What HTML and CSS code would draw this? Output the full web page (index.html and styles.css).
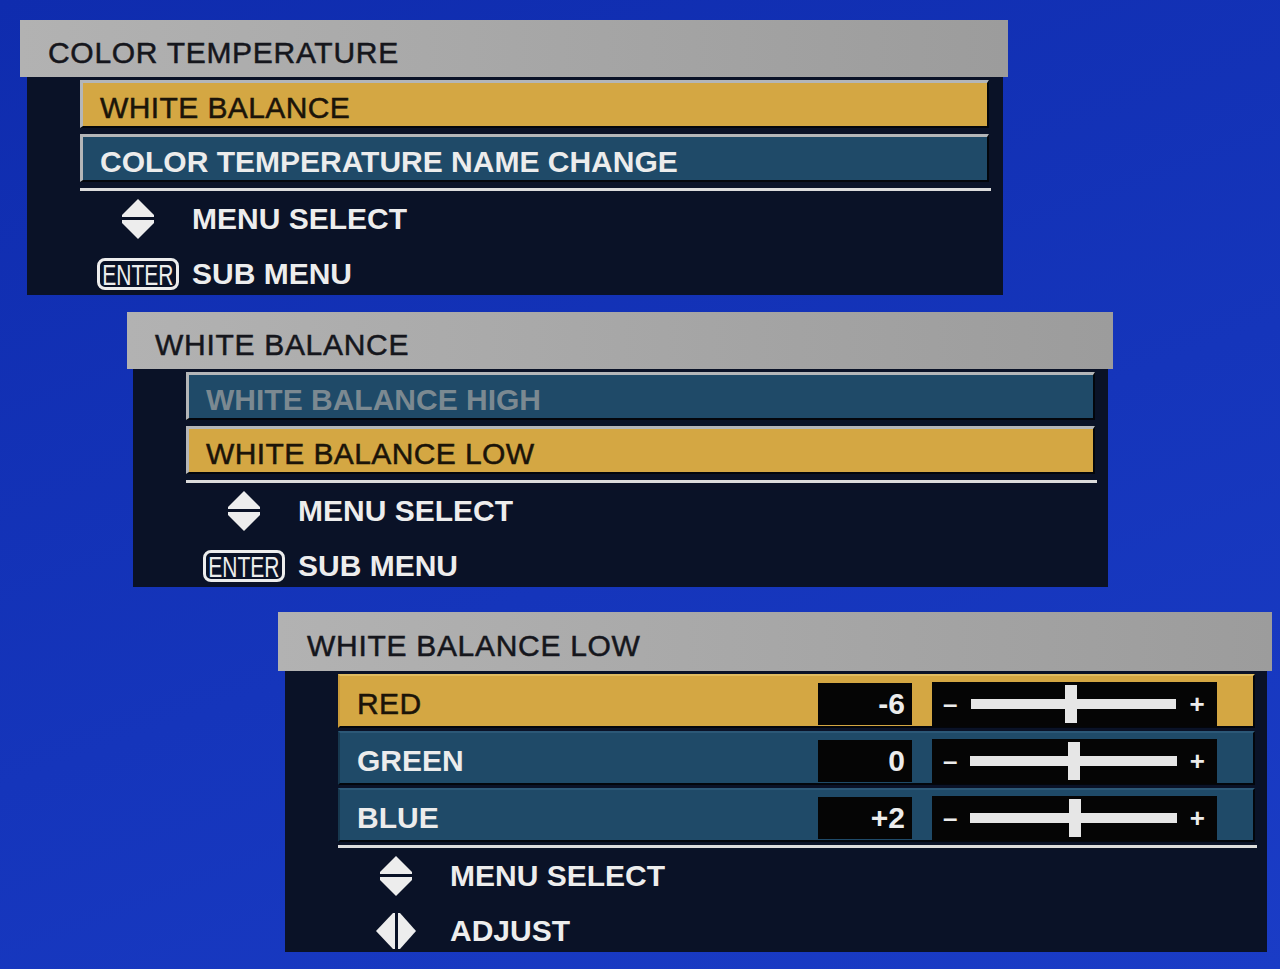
FILE: index.html
```html
<!DOCTYPE html>
<html lang="en">
<head>
  <meta charset="UTF-8">
  <meta name="viewport" content="width=device-width, initial-scale=1.0">
  <link rel="stylesheet" href="styles.css">
  <title>Projector Menu - White Balance</title>
</head>
<body>
  <!-- color temperature menu -->
  <section class="panel panel-temp">
    <div class="panel-head">COLOR TEMPERATURE</div>
    <div class="panel-body">
      <div class="item is-active">WHITE BALANCE</div>
      <div class="item">COLOR TEMPERATURE NAME CHANGE</div>
      <div class="rule"></div>
      <ul class="hints">
        <li>
          <span class="key">
            <svg width="32" height="40" viewBox="0 0 32 40"><polygon points="16,0 32,16 32,18 0,18 0,16" fill="#ededed"/><polygon points="0,21 32,21 32,24 16,40 0,24" fill="#ededed"/></svg>
          </span>
          MENU SELECT
        </li>
        <li>
          <span class="key"><span class="enter"><span>ENTER</span></span></span>
          SUB MENU
        </li>
      </ul>
    </div>
  </section>

  <!-- white balance menu -->
  <section class="panel panel-wb">
    <div class="panel-head">WHITE BALANCE</div>
    <div class="panel-body">
      <div class="item is-off">WHITE BALANCE HIGH</div>
      <div class="item is-active">WHITE BALANCE LOW</div>
      <div class="rule"></div>
      <ul class="hints">
        <li>
          <span class="key">
            <svg width="32" height="40" viewBox="0 0 32 40"><polygon points="16,0 32,16 32,18 0,18 0,16" fill="#ededed"/><polygon points="0,21 32,21 32,24 16,40 0,24" fill="#ededed"/></svg>
          </span>
          MENU SELECT
        </li>
        <li>
          <span class="key"><span class="enter"><span>ENTER</span></span></span>
          SUB MENU
        </li>
      </ul>
    </div>
  </section>

  <!-- white balance low: per channel adjust -->
  <section class="panel panel-low">
    <div class="panel-head">WHITE BALANCE LOW</div>
    <div class="panel-body">
      <div class="item channel is-active">
        <span class="label">RED</span>
        <span class="value">-6</span>
        <span class="slider"><span class="end">–</span><span class="track"><span class="tick" style="left: 48.5%"></span></span><span class="end">+</span></span>
      </div>
      <div class="item channel">
        <span class="label">GREEN</span>
        <span class="value">0</span>
        <span class="slider"><span class="end">–</span><span class="track"><span class="tick" style="left: 50%"></span></span><span class="end">+</span></span>
      </div>
      <div class="item channel">
        <span class="label">BLUE</span>
        <span class="value">+2</span>
        <span class="slider"><span class="end">–</span><span class="track"><span class="tick" style="left: 50.5%"></span></span><span class="end">+</span></span>
      </div>
      <div class="rule"></div>
      <ul class="hints">
        <li>
          <span class="key">
            <svg width="32" height="40" viewBox="0 0 32 40"><polygon points="16,0 32,16 32,18 0,18 0,16" fill="#ededed"/><polygon points="0,21 32,21 32,24 16,40 0,24" fill="#ededed"/></svg>
          </span>
          MENU SELECT
        </li>
        <li>
          <span class="key">
            <svg width="40" height="36" viewBox="0 0 40 36"><polygon points="0,18 17,0 19,0 19,36 17,36" fill="#ededed"/><polygon points="22,0 24,0 40,18 24,36 22,36" fill="#ededed"/></svg>
          </span>
          ADJUST
        </li>
      </ul>
    </div>
  </section>
</body>
</html>
```

FILE: styles.css
```css
* {
  box-sizing: border-box;
}

html, body {
  height: 100%;
}

body {
  margin: 0;
  padding-top: 20px;
  overflow: hidden;
  font-family: "Liberation Sans", Arial, sans-serif;
  background: linear-gradient(160deg, #0f2cae 0%, #1535bb 55%, #1a3cc6 100%);
}

/* panels */
.panel {
  width: 988px;
  margin-left: 20px;
}

.panel-wb {
  width: 986px;
  margin-top: 17px;
  margin-left: 127px;
}

.panel-low {
  width: 994px;
  margin-top: 25px;
  margin-left: 278px;
}

.panel-head {
  height: 57px;
  padding: 8px 0 0 28px;
  display: flex;
  align-items: center;
  background: linear-gradient(to right, #b2b2b2, #9c9c9c);
  color: #15161c;
  font-size: 30px;
  letter-spacing: 0.7px;
  -webkit-text-stroke: 0.5px #15161c;
}

.panel-low .panel-head {
  height: 59px;
  padding-left: 29px;
}

.panel-body {
  margin: 0 5px 0 7px;
  padding: 3px 14px 0 53px;
  background: #0a1227;
}

.panel-wb .panel-body {
  margin-left: 6px;
  padding-right: 13px;
}

.panel-low .panel-body {
  padding-right: 12px;
}

/* menu rows */
.item {
  height: 48px;
  margin-bottom: 6px;
  padding: 6px 0 0 17px;
  display: flex;
  align-items: center;
  border-top: 3px solid #b4b6b8;
  border-left: 3px solid #b4b6b8;
  border-right: 2px solid #03060c;
  border-bottom: 2px solid #03060c;
  background: #1f4a68;
  color: #ececec;
  font-size: 30px;
  font-weight: bold;
}

.item.is-active {
  background: #d4a743;
  color: #1b1409;
  font-weight: normal;
  letter-spacing: 0.4px;
  -webkit-text-stroke: 0.5px #1b1409;
}

.item.is-off {
  color: #7b8991;
}

.rule {
  height: 3px;
  margin: 1px -2px 0 0;
  background: #dcdcdc;
}

.panel-low .item {
  height: 54px;
  margin-bottom: 3px;
  border-top-width: 2px;
  border-left-width: 2px;
  border-top-color: #2c5877;
  border-left-color: #17384f;
}

.panel-low .item.is-active {
  border-top-color: #e0bc60;
  border-left-color: #c99b3a;
}

.panel-low .rule {
  margin-top: 3px;
}

/* channel rows with value and slider */
.channel .label {
  flex: 1;
}

.value {
  width: 94px;
  height: 42px;
  margin-right: 20px;
  padding-right: 7px;
  display: flex;
  align-items: center;
  justify-content: flex-end;
  background: #050505;
  color: #ececec;
  font-weight: bold;
  letter-spacing: 0;
  -webkit-text-stroke: 0;
}

.slider {
  width: 285px;
  height: 45px;
  margin-right: 36px;
  padding: 0 12px 0 11px;
  display: flex;
  align-items: center;
  background: #050505;
  color: #ececec;
  font-size: 26px;
  font-weight: bold;
  -webkit-text-stroke: 0;
}

.track {
  flex: 1;
  height: 10px;
  margin: 0 13px;
  position: relative;
  background: #e6e6e6;
}

.tick {
  position: absolute;
  top: -14px;
  width: 12px;
  height: 38px;
  margin-left: -6px;
  background: #e6e6e6;
}

/* key hints */
.hints {
  list-style: none;
  margin: 0;
  padding: 0 0 0 17px;
}

.hints li {
  height: 52px;
  padding-top: 3px;
  display: flex;
  align-items: center;
  gap: 13px;
  color: #ededed;
  font-size: 30px;
  font-weight: bold;
}

.hints li + li {
  padding-top: 9px;
}

.hints .key {
  width: 82px;
  display: flex;
  justify-content: center;
}

/* boxed ENTER key */
.enter {
  width: 82px;
  height: 32px;
  border: 3px solid #ededed;
  border-radius: 8px;
  display: flex;
  align-items: center;
  justify-content: center;
  overflow: hidden;
}

.enter span {
  display: inline-block;
  font-size: 30px;
  font-weight: normal;
  line-height: 1;
  padding-top: 2px;
  transform: scaleX(0.7);
}
```
